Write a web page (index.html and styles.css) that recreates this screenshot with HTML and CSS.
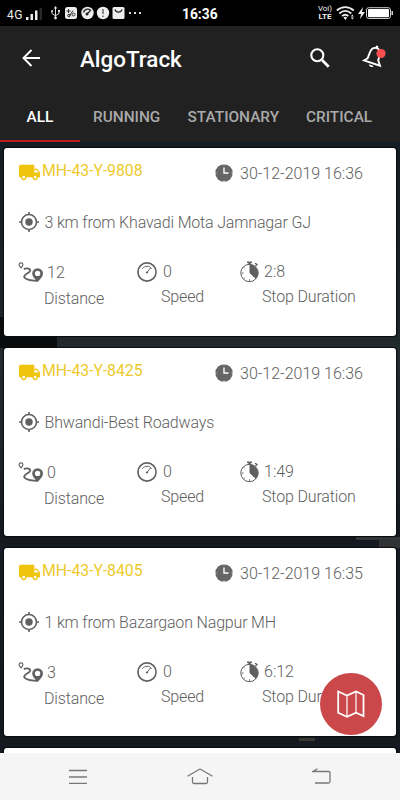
FILE: index.html
```html
<!DOCTYPE html>
<html lang="en">
<head>
<meta charset="utf-8">
<title>AlgoTrack</title>
<link rel="stylesheet" href="styles.css">
</head>
<body>
<svg class="sprite" width="0" height="0">
  <symbol id="truck" viewBox="0 0 24 24"><path fill="currentColor" d="M20 8h-3V4H3c-1.1 0-2 .9-2 2v11h2c0 1.66 1.34 3 3 3s3-1.34 3-3h6c0 1.66 1.34 3 3 3s3-1.34 3-3h2v-5l-3-4zM6 18.500a1.500 1.500 0 1 1 0-3 1.500 1.500 0 0 1 0 3zm13.500-9l1.960 2.500H17V9.500h2.500zm-1.500 9a1.500 1.500 0 1 1 0-3 1.500 1.500 0 0 1 0 3z"/></symbol>
  <symbol id="clock" viewBox="0 0 18 18"><circle cx="9" cy="9" r="8.700" fill="currentColor"/><path d="M9 3.500V9h4.500" fill="none" stroke="#fff" stroke-width="1.400"/><path d="M9 0v1.500M9 16.500V18M0 9h1.500M16.500 9H18" stroke="#fff" stroke-width=".7"/></symbol>
  <symbol id="target" viewBox="0 0 20 20"><g fill="none" stroke="currentColor" stroke-width="1.600"><circle cx="10" cy="10" r="7.500"/><path d="M10 0v3M10 17v3M0 10h3M17 10h3"/></g><circle cx="10" cy="10" r="3.700" fill="currentColor"/></symbol>
  <symbol id="route" viewBox="0 0 26 20"><path d="M3 5.900C1.600 4.300 1.100 3.700 1.100 2.800a1.900 1.900 0 0 1 3.800 0c0 .9-.5 1.500-1.900 3.100z" fill="none" stroke="currentColor" stroke-width="1.100"/><path d="M5.800 7.100C9 5.500 13.200 6.800 11.800 9.400c-1.200 2.100-5.600 2.600-5.600 5.200 0 3 5 3.900 13 4.300" fill="none" stroke="currentColor" stroke-width="1.900"/><path fill="currentColor" fill-rule="evenodd" d="M19.700 20c-3.300-3.600-5.500-5.600-5.500-8.400a5.400 5.400 0 0 1 10.800 0c0 2.800-2.100 4.800-5.300 8.400zM19.600 8.700a2.700 2.700 0 1 0 0 5.400 2.700 2.700 0 0 0 0-5.400z"/></symbol>
  <symbol id="gauge" viewBox="0 0 20 20"><g fill="none" stroke="currentColor"><circle cx="10" cy="10" r="9.100" stroke-width="1.600"/><path stroke-width="1" d="M5.300 6.800C7.500 3.400 12.500 3.400 14.600 6.600M10 10.200l3.800-4.300"/></g><circle cx="10" cy="10.500" r="1.100" fill="currentColor"/></symbol>
  <symbol id="timer" viewBox="0 0 20 22"><circle cx="9.500" cy="12" r="8.700" fill="none" stroke="currentColor" stroke-width="1"/><path fill="currentColor" d="M9.500 12V3.500a8.500 8.500 0 0 1 6.200 14.300zM7 .6h5v1.500h-1.200v1.600H8.300V2.100H7zM14.500 2.600l1.200-.8 2.200 1.800-.9 1.200zM14.900 5l1.300-1.500.8.700-1.200 1.500z"/><path d="M1.500 12h2M9.500 18.200v2M3.500 6.200l1.200 1.200M3.700 17.800l1.100-1.200" stroke="currentColor" stroke-width=".9"/></symbol>
</svg>

<div class="screen">
  <header class="status">
    <span class="net">4G</span>
    <svg class="signal" width="17" height="13" viewBox="0 0 17 13"><path fill="#eee" d="M0 9h2.500v3H0zM4.500 6H7v6H4.500zM9 2.500h2.500V12H9z"/><path fill="#292929" d="M13.500 0H16v12h-2.500z"/></svg>
    <svg class="tray" width="94" height="14" viewBox="0 0 94 14">
      <g fill="none" stroke="#ddd" stroke-width="1"><path d="M5.500 1v11M2 5v2.500l3.500 2.300L9 7.500V5"/></g><path fill="#ddd" d="M3.700 2.600L5.500 0l1.800 2.600z"/><circle cx="5.500" cy="12" r="1.400" fill="#ddd"/><circle cx="2" cy="5" r="1" fill="#ddd"/><path fill="#ddd" d="M8 4h2v2H8z"/>
      <rect x="15" y="1" width="12" height="12" rx="2.500" fill="#eee"/><path d="M18.500 3v4M16.500 5h4M23 4.500l-4 6" stroke="#333"/><circle cx="19" cy="9.500" r="1.300" fill="none" stroke="#333"/><circle cx="23.500" cy="8.500" r="1.500" fill="none" stroke="#333"/>
      <circle cx="37.500" cy="7" r="6.200" fill="#eee"/><path d="M33.500 6.500c1-4 6-4.500 7.500-1.500M37 8l3-3" fill="none" stroke="#222" stroke-width="1.200"/><circle cx="37" cy="8" r="1.500" fill="#222"/>
      <circle cx="53" cy="7" r="6.200" fill="#eee"/><path d="M53 3v5M53 9.500V11" stroke="#555" stroke-width="1.300"/>
      <rect x="62.500" y="1" width="12" height="12" rx="1.500" fill="#eee"/><path d="M65 3.500c1 3.500 6 3.500 7 0" fill="none" stroke="#222" stroke-width="1.200"/>
      <path fill="#ddd" d="M79 6h2v2h-2zM84 6h2v2h-2zM89 6h2v2h-2z"/>
    </svg>
    <span class="time">16:36</span>
    <span class="volte"><span>Voi)</span><b>LTE</b></span>
    <svg class="wifi" width="19" height="14" viewBox="0 0 19 14"><g fill="none" stroke="#eee" stroke-width="1.700"><path d="M.8 4.500c5-4.600 12-4.600 17 0M3.300 7.500c3.800-3.300 8.200-3.300 12 0M6 10.200c2-1.800 4.500-1.800 6.500 0"/></g><path fill="#eee" d="M7.500 11.500L9.300 14l1.800-2.500c-1-.9-2.600-.9-3.600 0zM14.800 10.500l1.500-2 1.500 2zM14.800 11.500l1.500 2 1.500-2z"/></svg>
    <svg class="battery" width="36" height="14" viewBox="0 0 36 14"><path fill="#eee" d="M5 1L0 8h3l-1 5 5-7H4z"/><rect x="8.500" y="1.700" width="24" height="10.800" rx="2.300" fill="none" stroke="#ccc"/><rect x="10" y="3" width="21" height="8.200" rx="1" fill="#fff"/><path fill="#ccc" d="M33.500 5H35v4h-1.500z"/></svg>
  </header>

  <div class="appbar">
    <svg class="back" width="18" height="18" viewBox="0 0 18 18"><path d="M18 9H1.500M9.500 1L1.500 9l8 8" fill="none" stroke="#fff" stroke-width="1.900"/></svg>
    <h1>AlgoTrack</h1>
    <svg class="search" width="20" height="20" viewBox="0 0 20 20"><g fill="none" stroke="#fff"><circle cx="7.300" cy="7.300" r="6" stroke-width="2.100"/><path d="M12 12l6.700 6.700" stroke-width="2.700"/></g></svg>
    <svg class="bell" width="26" height="24" viewBox="0 0 26 24"><g fill="none" stroke="#fff" stroke-width="1.900"><path d="M2 15.500l3.700-2.300 2.200-5.900c1.400-3.500 4-5 6.700-4.200 3 1 4.300 3.600 3.100 7.200l-1.500 4.900 1.800 5.500z"/><path d="M14.600 3l.7-2.200" stroke-width="2.500"/></g><path fill="#fff" d="M6.800 19.300l4.800 1.600c-1 2-4.700 1-4.800-1.600z"/><circle cx="19" cy="8.500" r="4.600" fill="#fc5050"/></svg>
  </div>

  <nav class="tabs">
    <span class="tab active">ALL</span>
    <span class="tab running">RUNNING</span>
    <span class="tab stationary">STATIONARY</span>
    <span class="tab critical">CRITICAL</span>
  </nav>

  <main class="list">
    <article class="card">
      <div class="top"><svg class="truck"><use href="#truck"/></svg><span class="plate">MH-43-Y-9808</span><svg class="clock"><use href="#clock"/></svg><time>30-12-2019 16:36</time></div>
      <div class="place"><svg class="target"><use href="#target"/></svg><span>3 km from Khavadi Mota Jamnagar GJ</span></div>
      <div class="stats">
        <div class="stat distance"><svg><use href="#route"/></svg><span class="value">12</span><span class="label">Distance</span></div>
        <div class="stat speed"><svg><use href="#gauge"/></svg><span class="value">0</span><span class="label">Speed</span></div>
        <div class="stat stop"><svg><use href="#timer"/></svg><span class="value">2:8</span><span class="label">Stop Duration</span></div>
      </div>
    </article>
    <article class="card">
      <div class="top"><svg class="truck"><use href="#truck"/></svg><span class="plate">MH-43-Y-8425</span><svg class="clock"><use href="#clock"/></svg><time>30-12-2019 16:36</time></div>
      <div class="place"><svg class="target"><use href="#target"/></svg><span>Bhwandi-Best Roadways</span></div>
      <div class="stats">
        <div class="stat distance"><svg><use href="#route"/></svg><span class="value">0</span><span class="label">Distance</span></div>
        <div class="stat speed"><svg><use href="#gauge"/></svg><span class="value">0</span><span class="label">Speed</span></div>
        <div class="stat stop"><svg><use href="#timer"/></svg><span class="value">1:49</span><span class="label">Stop Duration</span></div>
      </div>
    </article>
    <article class="card">
      <div class="top"><svg class="truck"><use href="#truck"/></svg><span class="plate">MH-43-Y-8405</span><svg class="clock"><use href="#clock"/></svg><time>30-12-2019 16:35</time></div>
      <div class="place"><svg class="target"><use href="#target"/></svg><span>1 km from Bazargaon Nagpur MH</span></div>
      <div class="stats">
        <div class="stat distance"><svg><use href="#route"/></svg><span class="value">3</span><span class="label">Distance</span></div>
        <div class="stat speed"><svg><use href="#gauge"/></svg><span class="value">0</span><span class="label">Speed</span></div>
        <div class="stat stop"><svg><use href="#timer"/></svg><span class="value">6:12</span><span class="label">Stop Duration</span></div>
      </div>
    </article>
    <article class="card"></article>
  </main>

  <footer class="sysnav">
    <svg width="18" height="16" viewBox="0 0 18 16"><path d="M0 1.500h18M0 8h18M0 14.300h18"/></svg>
    <svg width="26" height="17" viewBox="0 0 26 17"><path d="M.5 8.300L12 1.500q1-.6 2 0l11.500 6.800M5.500 9v5q0 1.500 1.500 1.500h12q1.500 0 1.500-1.500V9"/></svg>
    <svg width="19" height="17" viewBox="0 0 19 17"><path d="M5.500 .8L1 3.500h15.500q1.500 0 1.500 1.500v8.500q0 1.500-1.500 1.500H3"/></svg>
  </footer>

  <div class="fab"><svg width="28" height="28" viewBox="0 0 28 28"><g fill="none" stroke="#fff"><path stroke-width="1.800" d="M1.200 1.500l8.800 4 9-4 7.500 3.500v21l-7.500-3.300-9 4-8.800-4z"/><path stroke-width="1.200" d="M10 5.500v21M19 1.500v21"/></g></svg></div>
</div>
</body>
</html>
```

FILE: styles.css
```css
* { box-sizing: border-box; }
body { margin: 0; font-family: Roboto, "Liberation Sans", sans-serif; }
svg { flex: none; display: block; }
.sprite { position: absolute; }

.screen {
  position: relative;
  display: flex;
  flex-direction: column;
  width: 400px;
  height: 800px;
  overflow: hidden;
}

.status { display: flex; flex: none; height: 26px; padding: 7px 0 0 7px; background: #000; color: #eee; }
.net { width: 19px; font-size: 12px; line-height: 16px; letter-spacing: 0.5px; }
.signal { margin: 1px 7px 0 0; }
.tray { margin-top: -1px; }
.time { width: 60px; margin-left: 38px; font-size: 13.8px; line-height: 15px; font-weight: 700; color: #fff; }
.volte { display: flex; flex-direction: column; width: 18px; margin-left: 74px; margin-top: -2px; font-size: 8px; line-height: 8px; text-align: center; }
.wifi { margin-top: -1px; margin-left: 2px; }
.battery { margin: -1px 0 0 3px; }

.appbar { display: flex; flex: none; align-items: center; height: 64px; padding-left: 22px; background: #212121; }
.back { margin-right: 40px; }
h1 { width: 230px; margin: 2px 0 0; font-size: 22.4px; font-weight: 500; color: #fff; white-space: nowrap; }
.search { margin-right: 32px; margin-top: -1px; }
.bell { margin-top: -3px; }

.tabs { display: flex; flex: none; height: 52px; background: #212121; color: #aaa; font-size: 15.4px; font-weight: 500; line-height: 54px; }
.tab { white-space: nowrap; }
.active { width: 80px; text-align: center; color: #fff; border-bottom: 2px solid #b71c1c; }
.running { width: 94px; padding-left: 13px; }
.stationary { width: 119px; padding-left: 13.500px; }
.critical { padding-left: 13px; }

.list {
  display: flex;
  flex: 1;
  flex-direction: column;
  gap: 12px;
  padding: 6px 4px 0;
  overflow: hidden;
  background:
    linear-gradient(#090b0c, #090b0c) 0 175px / 57px 31px no-repeat,
    linear-gradient(#3a3631, #3a3631) 299px 596px / 16px 3px no-repeat,
    linear-gradient(#343638, #343638) 356px 395px / 44px 3px no-repeat,
    linear-gradient(#303234, #303234) 379px 395px / 21px 11px no-repeat,
    linear-gradient(#131d24 0, #1c262b 190px, #242b2f 206px, #202426 320px, #15181c 394px, #171b25 410px, #151a20 611px);
}
.card { flex: none; height: 188px; padding: 12px 0 0 14px; border-radius: 3px; background: #fff; box-shadow: 0 0 1px 1px #0a0c0e; color: #606060; font-size: 16px; font-weight: 300; white-space: nowrap; }
.top { display: flex; height: 24px; line-height: 22px; }
.truck { width: 23px; height: 23px; margin-top: 1px; color: #f1c40c; }
.plate { width: 174px; padding-left: 1px; color: #edca2a; font-size: 15.8px; font-weight: 400; }
.clock { width: 18px; height: 18px; margin-top: 4px; color: #666; }
time { margin: 3px 0 0 7px; }
.place { display: flex; align-items: center; gap: 5.500px; height: 20px; margin-top: 28px; padding-left: 1px; letter-spacing: -0.17px; }
.target { width: 20px; height: 20px; color: #606060; }
.stats { display: flex; margin-top: 28px; }
.stat { display: grid; grid-template-rows: 25px 24px; column-gap: 5px; line-height: 24px; }
.stat svg { width: 20px; height: 20px; margin-top: 2px; }
.label { grid-column: 1 / -1; letter-spacing: -0.15px; }
.distance { width: 119px; grid-template-columns: 25px 1fr; padding-top: 1px; column-gap: 4px; }
.distance svg { width: 26px; height: 20px; margin-top: 1px; }
.distance .label { padding: 1px 0 0 26px; }
.speed { width: 103px; grid-template-columns: 20px 1fr; column-gap: 6px; }
.speed .label { padding-left: 24px; }
.stop { grid-template-columns: 19px 1fr; }
.stop svg { height: 22px; margin-top: 1px; }
.stop .label { padding-left: 22px; }

.sysnav { display: flex; flex: none; justify-content: space-between; align-items: center; height: 47px; padding: 0 69px; background: #f5f5f5; }
.sysnav svg { fill: none; stroke: #777; stroke-width: 1.3; }

.fab {
  position: absolute;
  left: 320px;
  top: 673px;
  display: flex;
  align-items: center;
  justify-content: center;
  width: 62px;
  height: 62px;
  border-radius: 50%;
  background: #ca474a;
}
```
